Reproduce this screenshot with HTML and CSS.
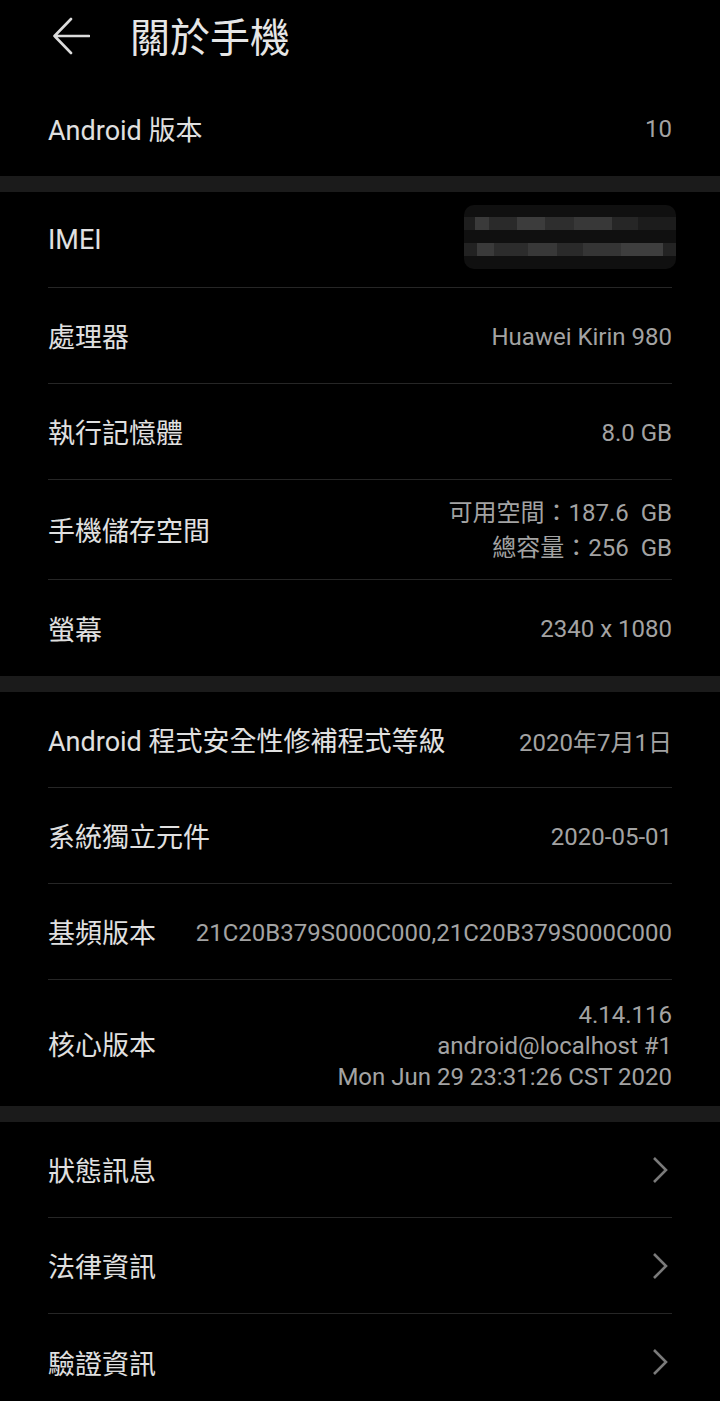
FILE: index.html
```html
<!DOCTYPE html>
<html lang="zh-Hant">
<head>
    <meta charset="UTF-8">
    <meta name="viewport" content="width=device-width, initial-scale=1.0">
    <title>關於手機</title>
    <link rel="stylesheet" href="styles.css">
</head>
<body>
<header class="topbar">
    <svg class="back" width="38" height="38" viewBox="0 0 38 38">
        <path d="M19 2 L2.5 19 L19 36 M2.5 19 H37" fill="none" stroke="#dcdcdc" stroke-width="2.6" stroke-linecap="round" stroke-linejoin="round"/>
    </svg>
    <h1 class="title">關於手機</h1>
</header>

<section class="group">
    <div class="row first">
        <span class="label">Android 版本</span>
        <span class="value">10</span>
    </div>
</section>

<div class="band"></div>

<section class="group">
    <div class="row">
        <span class="label">IMEI</span>
        <div class="blur">
            <div class="blur-bar"></div>
            <div class="blur-bar second"></div>
        </div>
    </div>
    <div class="row">
        <span class="label">處理器</span>
        <span class="value">Huawei Kirin 980</span>
    </div>
    <div class="row">
        <span class="label">執行記憶體</span>
        <span class="value">8.0 GB</span>
    </div>
    <div class="row storage">
        <span class="label">手機儲存空間</span>
        <span class="value">可用空間：187.6&nbsp; GB<br>總容量：256&nbsp; GB</span>
    </div>
    <div class="row">
        <span class="label">螢幕</span>
        <span class="value">2340 x 1080</span>
    </div>
</section>

<div class="band"></div>

<section class="group">
    <div class="row">
        <span class="label">Android 程式安全性修補程式等級</span>
        <span class="value">2020年7月1日</span>
    </div>
    <div class="row">
        <span class="label">系統獨立元件</span>
        <span class="value">2020-05-01</span>
    </div>
    <div class="row">
        <span class="label">基頻版本</span>
        <span class="value">21C20B379S000C000,21C20B379S000C000</span>
    </div>
    <div class="row kernel">
        <span class="label">核心版本</span>
        <span class="value">4.14.116<br>android@localhost #1<br>Mon Jun 29 23:31:26 CST 2020</span>
    </div>
</section>

<div class="band"></div>

<section class="group">
    <div class="row">
        <span class="label">狀態訊息</span>
        <svg class="chevron" width="16" height="28" viewBox="0 0 16 28"><path d="M2 2 L14 14 L2 26" fill="none" stroke="#7a7a7a" stroke-width="2.6"/></svg>
    </div>
    <div class="row">
        <span class="label">法律資訊</span>
        <svg class="chevron" width="16" height="28" viewBox="0 0 16 28"><path d="M2 2 L14 14 L2 26" fill="none" stroke="#7a7a7a" stroke-width="2.6"/></svg>
    </div>
    <div class="row">
        <span class="label">驗證資訊</span>
        <svg class="chevron" width="16" height="28" viewBox="0 0 16 28"><path d="M2 2 L14 14 L2 26" fill="none" stroke="#7a7a7a" stroke-width="2.6"/></svg>
    </div>
</section>
</body>
</html>
```

FILE: styles.css
```css
body {
    margin: 0;
    background-color: #000;
    color: #e2e2e2;
    font-family: Roboto, "Noto Sans CJK TC", sans-serif;
}
.topbar {
    height: 80px;
    display: flex;
    align-items: center;
    padding-left: 52px;
}
.back {
    margin-top: -8px;
}
.title {
    margin: -10px 0 0 40px;
    font-size: 40px;
    font-weight: normal;
    color: #e6e6e6;
}
.band {
    height: 16px;
    background-color: #1b1b1b;
}
.group {
    padding: 0 48px;
}
.row {
    min-height: 96px;
    display: flex;
    align-items: center;
    justify-content: space-between;
    border-bottom: 1px solid #262626;
    box-sizing: border-box;
}
.row:last-child {
    border-bottom: none;
}
.label {
    font-size: 27px;
    color: #e0e0e0;
    white-space: nowrap;
}
.value {
    font-size: 24px;
    color: #a3a3a3;
    text-align: right;
    white-space: nowrap;
    margin-top: 2px;
}
.storage {
    min-height: 100px;
}
.storage .value {
    line-height: 35px;
}
.kernel {
    min-height: 126px;
}
.kernel .value {
    line-height: 31px;
    margin-top: 6px;
}
.chevron {
    margin-right: 4px;
}
.blur {
    width: 212px;
    height: 64px;
    margin-right: -4px;
    margin-top: -6px;
    border-radius: 10px;
    background-color: #101010;
    display: flex;
    flex-direction: column;
    justify-content: center;
    gap: 13px;
}
.blur-bar {
    height: 13px;
    background: linear-gradient(90deg, #1e1e1e 0 5%, #3a3a3a 5% 12%, #2a2a2a 12% 25%, #3c3c3c 25% 38%, #2e2e2e 38% 52%, #383838 52% 70%, #262626 70% 82%, #1c1c1c 82% 100%);
}
.blur-bar.second {
    background: linear-gradient(90deg, #222 0 6%, #3a3a3a 6% 14%, #2c2c2c 14% 30%, #383838 30% 44%, #2a2a2a 44% 56%, #353535 56% 74%, #3e3e3e 74% 94%, #232323 94% 100%);
}
```
